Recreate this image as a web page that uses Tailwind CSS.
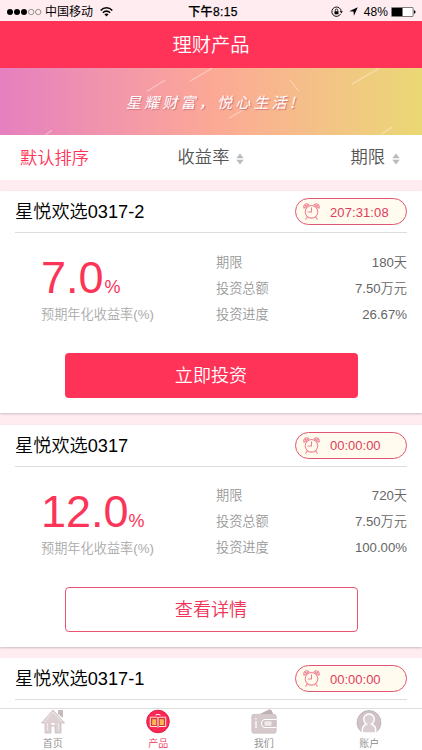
<!DOCTYPE html>
<html lang="zh-CN">
<head>
<meta charset="utf-8">
<meta name="viewport" content="width=device-width, initial-scale=1">
<title>理财产品</title>
<script src="https://cdn.jsdelivr.net/npm/@tailwindcss/browser@4"></script>
</head>
<body class="w-[422px] h-[750px] overflow-hidden bg-[#feecf0] font-['Liberation_Sans','Noto_Sans_CJK_SC',sans-serif] font-[350]">
<svg class="hidden">
  <symbol id="clock" viewBox="0 0 18 18">
    <g fill="none" stroke="#ee8191" stroke-width="1.1" stroke-linecap="round">
      <circle cx="9" cy="9.3" r="6.7"/>
      <path d="M9 5.1v4.4H5.4M1.1 5.4C-.2 2 3.4-.5 6 1.8zM16.9 5.4C18.2 2 14.6-.5 12 1.8zM4.4 14.8 2.9 17.2M13.6 14.8l1.5 2.4M2.2 2.2l1.5 1.3M15.8 2.2l-1.5 1.3"/>
    </g>
  </symbol>
</svg>
<div class="flex flex-col h-[750px]">
  <header class="shrink-0">
    <div class="h-[21px] pt-px grid grid-cols-[1fr_auto_1fr] items-center text-black text-[12px] leading-[20px] font-normal">
      <div class="flex items-center pl-[7px]">
        <svg class="w-[35px] h-[8px]" viewBox="0 0 35 8"><g><circle cx="3" cy="4" r="3"/><circle cx="10" cy="4" r="3"/><circle cx="17" cy="4" r="3"/></g><g fill="none" stroke="#555" stroke-width=".6"><circle cx="24.2" cy="4" r="2.7"/><circle cx="31.2" cy="4" r="2.7"/></g></svg>
        <span class="ml-[3px] pt-px">中国移动</span>
        <svg class="ml-[7px] w-[13px] h-[10px]" viewBox="0 0 13 10"><g fill="none" stroke="#000" stroke-width="1.6"><path d="M.7 3.5C4-.1 9-.1 12.3 3.5M2.9 5.7c2-2.1 5.2-2.1 7.2 0"/></g><path d="M4.4 7.2c1.2-1.1 3-1.1 4.2 0L6.5 9.5z"/></svg>
      </div>
      <span class="pt-px font-medium tracking-[.35px] translate-x-[2px] [-webkit-text-stroke:.25px_black]">下午8:15</span>
      <div class="flex items-center justify-end pr-[6px]">
        <svg class="w-[12px] h-[12px]" viewBox="0 0 12 12"><path d="M9.7 7.8A4.7 4.7 0 1 1 10.2 5.6" fill="none" stroke="#000" stroke-width=".9"/><path d="M8.7 5.3h3.2l-1.6 2zM3.5 5.3h4v3h-4z"/><path d="M4.3 5.4V4.2a1.2 1.2 0 0 1 2.4 0v1.2" fill="none" stroke="#000" stroke-width=".8"/></svg>
        <svg class="ml-[6px] w-[9px] h-[9px]" viewBox="0 0 9 9"><path d="M8.8.2 4.9 8.8 4.5 4.6.2 4.2z"/></svg>
        <span class="ml-[6px] pt-px tracking-[.1px]">48%</span>
        <svg class="ml-[3px] w-[25px] h-[10px]" viewBox="0 0 25 10"><rect x=".4" y=".4" width="21.7" height="9.2" rx="1" fill="#fff" stroke="#333" stroke-width=".7"/><path d="M1 1h10.5v8H1z"/><path d="M23 3.3c2 .3 2 3.1 0 3.4z"/></svg>
      </div>
    </div>
    <h1 class="h-[46.5px] pt-px bg-[#ff3357] text-center text-white text-[19.3px] leading-[47px]">理财产品</h1>
    <div class="relative h-[67.5px] bg-linear-to-r from-[#e67fbf] via-[#fca896] to-[#ead874] overflow-hidden">
      <svg class="absolute inset-0 w-full h-full" viewBox="0 0 422 67"><g stroke="#fff" stroke-opacity=".4" stroke-width="1.1"><path d="M147 23 165 12M190 13 212 0M45 67l7-5M229 50l15-9M290 12l9 11M352 16l27-16M381 66l11-7"/></g></svg>
      <p class="relative pl-[126px] text-white text-[15px] leading-[67px] tracking-[3.2px] italic font-normal font-['Noto_Sans_CJK_SC',sans-serif] whitespace-nowrap [text-shadow:1px_1px_1px_#d26e78]">星耀财富，悦心生活!</p>
    </div>
    <nav class="h-[45px] bg-white flex text-[17.3px] leading-[47px] text-[#555]">
      <span class="w-[141px] pl-5 text-[#ff3357]">默认排序</span>
      <span class="w-[140px] flex items-center justify-center gap-[7px]">收益率
        <svg class="mt-[2px] w-[8px] h-[12px]" viewBox="0 0 8 12"><path d="M4 .5 7.7 5.2H.3zM4 11.5.3 6.8h7.4z" fill="#bbb"/></svg></span>
      <span class="flex-1 flex items-center justify-end gap-[7px] pr-[22px]">期限
        <svg class="mt-[2px] w-[8px] h-[12px]" viewBox="0 0 8 12"><path d="M4 .5 7.7 5.2H.3zM4 11.5.3 6.8h7.4z" fill="#bbb"/></svg></span>
    </nav>
  </header>

  <main class="flex-1 min-h-0 overflow-hidden pt-[11px] flex flex-col gap-[11.5px]">
    <section class="h-[222px] shrink-0 bg-white shadow-[0_1px_2px_#cdbcc1] px-[15px]">
      <div class="h-[42px] flex items-center justify-between border-b border-[#ddd]">
        <h2 class="pt-[2px] text-[18.2px] leading-[39px] text-black">星悦欢选0317-2</h2>
        <div class="w-[112px] h-[27px] flex items-center rounded-full border border-[#e25572] bg-[#fffbee] pl-[7px] text-[#e03c5b] text-[13px] tracking-[.1px]"><svg class="w-[17px] h-[17px] mr-[10px]"><use href="#clock"/></svg><span class="pt-[2px]">207:31:08</span></div>
      </div>
      <div class="h-[120px] flex">
        <div class="w-[201px] pl-[26px] pt-[20px]">
          <div class="h-[50px] text-[#fb3558] text-[45px] leading-[50px] whitespace-nowrap">7.0<span class="text-[18px] ml-[1px]">%</span></div>
          <p class="text-[13.2px] leading-[20px] text-[#aaa] mt-[2px]">预期年化收益率(%)</p>
        </div>
        <dl class="flex-1 pt-[17px] text-[13.2px] leading-[26px] text-[#666]">
          <div class="flex justify-between"><dt class="text-[#999]">期限</dt><dd>180天</dd></div>
          <div class="flex justify-between"><dt class="text-[#999]">投资总额</dt><dd>7.50万元</dd></div>
          <div class="flex justify-between"><dt class="text-[#999]">投资进度</dt><dd>26.67%</dd></div>
        </dl>
      </div>
      <button class="block mx-auto w-[293px] h-[45px] pt-[2px] rounded-[4px] bg-[#ff3357] text-white text-[18.1px] leading-[43px]">立即投资</button>
    </section>

    <section class="h-[222px] shrink-0 bg-white shadow-[0_1px_2px_#cdbcc1] px-[15px]">
      <div class="h-[42px] flex items-center justify-between border-b border-[#ddd]">
        <h2 class="pt-[2px] text-[18.2px] leading-[39px] text-black">星悦欢选0317</h2>
        <div class="w-[112px] h-[27px] flex items-center rounded-full border border-[#e25572] bg-[#fffbee] pl-[7px] text-[#e03c5b] text-[13px]"><svg class="w-[17px] h-[17px] mr-[10px]"><use href="#clock"/></svg><span class="pt-[2px]">00:00:00</span></div>
      </div>
      <div class="h-[120px] flex">
        <div class="w-[201px] pl-[26px] pt-[20px]">
          <div class="h-[50px] text-[#fb3558] text-[45px] leading-[50px] whitespace-nowrap">12.0<span class="text-[18px]">%</span></div>
          <p class="text-[13.2px] leading-[20px] text-[#aaa] mt-[2px]">预期年化收益率(%)</p>
        </div>
        <dl class="flex-1 pt-[16px] text-[13.2px] leading-[26px] text-[#666]">
          <div class="flex justify-between"><dt class="text-[#999]">期限</dt><dd>720天</dd></div>
          <div class="flex justify-between"><dt class="text-[#999]">投资总额</dt><dd>7.50万元</dd></div>
          <div class="flex justify-between"><dt class="text-[#999]">投资进度</dt><dd>100.00%</dd></div>
        </dl>
      </div>
      <button class="block mx-auto w-[293px] h-[45px] pt-[2px] rounded-[4px] border border-[#e95470] bg-white text-[#f03357] text-[18.1px] leading-[41px]">查看详情</button>
    </section>

    <section class="h-[222px] shrink-0 bg-white px-[15px]">
      <div class="h-[42px] flex items-center justify-between border-b border-[#ddd]">
        <h2 class="pt-[2px] text-[18.2px] leading-[39px] text-black">星悦欢选0317-1</h2>
        <div class="w-[112px] h-[27px] flex items-center rounded-full border border-[#e25572] bg-[#fffbee] pl-[7px] text-[#e03c5b] text-[13px]"><svg class="w-[17px] h-[17px] mr-[10px]"><use href="#clock"/></svg><span class="pt-[2px]">00:00:00</span></div>
      </div>
    </section>
  </main>

  <footer class="h-[42px] shrink-0 bg-white border-t border-[#ddd] grid grid-cols-4 text-[10px] leading-[14px] text-[#888]">
    <a class="flex flex-col items-center">
      <svg class="w-[24px] h-[26px]" viewBox="0 0 24 26"><path d="M17 1h5v8l-5-4z" fill="#c5babc"/><path d="M12 1 .5 14H4v10h6v-7h4v7h6V14h3.5z" fill="#ddd1d4" stroke="#c9bdc0" stroke-width=".8"/><path d="M3 13 12 3l9 10M6.5 14v7.5M17.5 14v7.5" fill="none" stroke="#f0e8ea" stroke-width="1"/><path d="M10.5 14h3v2h-3z" fill="#fff"/></svg>
      <span class="mt-[2px]">首页</span>
    </a>
    <a class="flex flex-col items-center text-[#f03357]">
      <svg class="w-[24px] h-[26px]" viewBox="0 0 24 26"><circle cx="12" cy="12.5" r="11.3" fill="#fb2853" stroke="#d82048" stroke-width="1"/><path d="M4.3 8.2h6.2q1.5 0 1.5 1.3 0-1.3 1.5-1.3h6.2v9.3H13l-1 1-1-1H4.3z" fill="#d83a3b" stroke="#ffe0dc" stroke-width="1"/><path d="M6.2 10.2h4v5.7h-4zM13.8 10.2h4v5.7h-4z" fill="#ffb657"/><path d="M12 9.5v8M9.5 6q2.5-1.2 5 0" stroke="#fff" stroke-width="1" fill="none"/></svg>
      <span class="mt-[2px]">产品</span>
    </a>
    <a class="flex flex-col items-center">
      <svg class="w-[26px] h-[26px]" viewBox="0 0 26 26"><path d="M9 5 18 .5Q20 0 21 2l1 3z" fill="#bdb1b4"/><rect x=".8" y="5.3" width="24.4" height="19" rx="2" fill="#d5c9cc" stroke="#c4b7ba" stroke-width=".6"/><path d="M25.5 10.5h-11a4 4 0 0 0 0 8h11" fill="#cfc3c6" stroke="#fff" stroke-width="1.1"/><rect x="13.5" y="12.3" width="7" height="4.5" rx="1" fill="#f0e9eb"/><path d="M5 9v1.5M5 12v7" stroke="#fff" stroke-width="1.2"/></svg>
      <span class="mt-[2px]">我们</span>
    </a>
    <a class="flex flex-col items-center">
      <svg class="w-[26px] h-[26px]" viewBox="0 0 26 26"><path d="M6 23.3A12 12 0 1 1 20 23.3z" fill="#cfc3c6" stroke="#b9aeb1" stroke-width=".8"/><path d="M6.5 24c-1-5 1.5-8 4-9a5.3 5.3 0 1 1 5 0c2.5 1 5 4 4 9z" fill="#d9ced1" stroke="#fff" stroke-width="1.4"/></svg>
      <span class="mt-[2px]">账户</span>
    </a>
  </footer>
</div>
</body>
</html>
